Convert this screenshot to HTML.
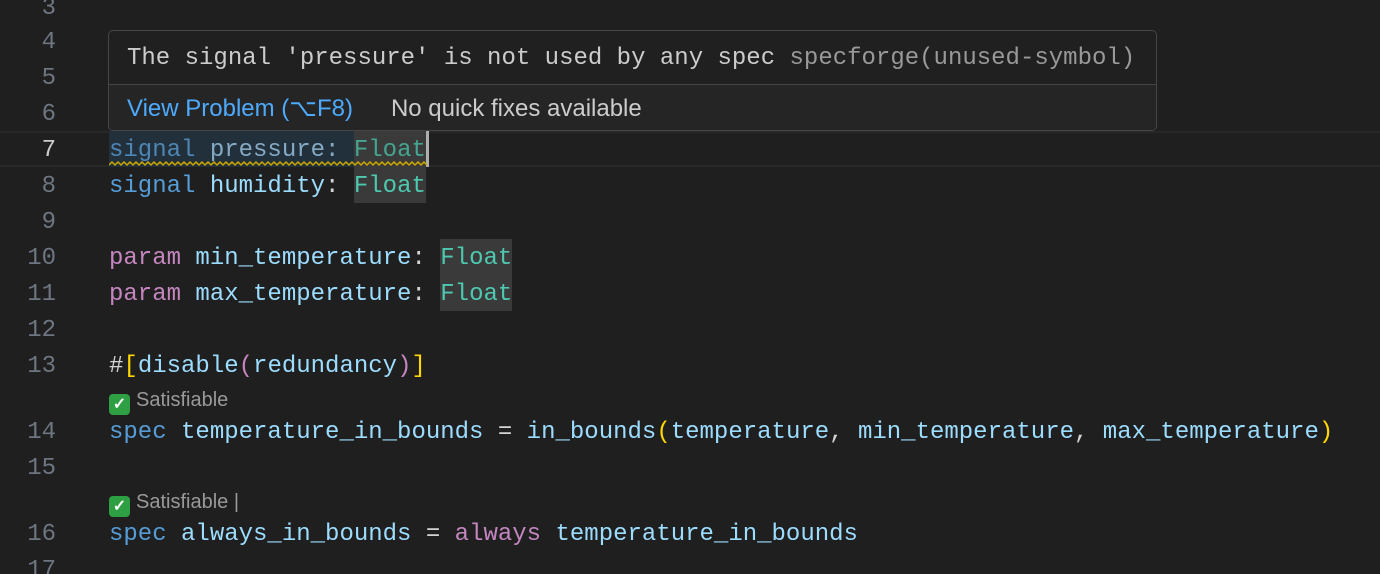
<!DOCTYPE html>
<html><head><style>
html,body{margin:0;width:1380px;height:574px;overflow:hidden}
body{background:#1f1f1f;font-family:"Liberation Mono",monospace;font-size:24px;position:relative}
.ln{position:absolute;left:0;width:56px;text-align:right;color:#6e7681;height:36px;line-height:40px}
.c{position:absolute;left:109px;height:36px;line-height:40px;white-space:pre;color:#9cdcfe}
.k{color:#569cd6}.p{color:#c586c0}.t{color:#4ec9b0}.w{color:#d4d4d4}.y{color:#ffd700}.v{color:#9cdcfe}
.fl{background:#3a3a3a;display:inline-block;height:36px;vertical-align:top;line-height:40px}
.lens{position:absolute;left:109px;height:30px;line-height:30px;font-family:"Liberation Sans",sans-serif;font-size:20px;color:#999;white-space:pre}
.chk{display:inline-block;width:21px;height:21px;background:#2ea043;border-radius:4px;color:#fff;text-align:center;line-height:21px;font-size:16px;vertical-align:-3px;margin-right:6px;font-weight:bold}
</style></head><body>
<div style="position:absolute;left:0;right:0;top:131px;height:32px;border-top:2px solid #282828;border-bottom:2px solid #282828"></div>
<div class="ln" style="top:-11px">3</div>
<div class="ln" style="top:23px">4</div>
<div class="ln" style="top:59px">5</div>
<div class="ln" style="top:95px">6</div>
<div class="ln" style="top:131px;color:#ccc">7</div>
<div class="ln" style="top:167px">8</div>
<div class="ln" style="top:203px">9</div>
<div class="ln" style="top:239px">10</div>
<div class="ln" style="top:275px">11</div>
<div class="ln" style="top:311px">12</div>
<div class="ln" style="top:347px">13</div>
<div class="ln" style="top:413px">14</div>
<div class="ln" style="top:449px">15</div>
<div class="ln" style="top:515px">16</div>
<div class="ln" style="top:551px">17</div>

<div class="c" style="top:131px"><span style="background:#22303c;display:inline-block;height:36px;vertical-align:top"><span style="color:#4f86b3">signal</span><span style="color:#86aac4"> pressure: </span></span><span class="fl" style="color:#45a590">Float</span><span style="display:inline-block;width:3px;height:36px;background:#aeafad;vertical-align:top"></span></div>
<svg style="position:absolute;left:109px;top:161px" width="318" height="6"><path d="M0 4 L3 1 L6 4 L9 1 L12 4 L15 1 L18 4 L21 1 L24 4 L27 1 L30 4 L33 1 L36 4 L39 1 L42 4 L45 1 L48 4 L51 1 L54 4 L57 1 L60 4 L63 1 L66 4 L69 1 L72 4 L75 1 L78 4 L81 1 L84 4 L87 1 L90 4 L93 1 L96 4 L99 1 L102 4 L105 1 L108 4 L111 1 L114 4 L117 1 L120 4 L123 1 L126 4 L129 1 L132 4 L135 1 L138 4 L141 1 L144 4 L147 1 L150 4 L153 1 L156 4 L159 1 L162 4 L165 1 L168 4 L171 1 L174 4 L177 1 L180 4 L183 1 L186 4 L189 1 L192 4 L195 1 L198 4 L201 1 L204 4 L207 1 L210 4 L213 1 L216 4 L219 1 L222 4 L225 1 L228 4 L231 1 L234 4 L237 1 L240 4 L243 1 L246 4 L249 1 L252 4 L255 1 L258 4 L261 1 L264 4 L267 1 L270 4 L273 1 L276 4 L279 1 L282 4 L285 1 L288 4 L291 1 L294 4 L297 1 L300 4 L303 1 L306 4 L309 1 L312 4 L315 1 L318 4" fill="none" stroke="#cca700" stroke-width="1.5"/></svg>
<div class="c" style="top:167px"><span class="k">signal</span> humidity<span class="w">:</span> <span class="t fl">Float</span></div>
<div class="c" style="top:239px"><span class="p">param</span> min_temperature<span class="w">:</span> <span class="t fl">Float</span></div>
<div class="c" style="top:275px"><span class="p">param</span> max_temperature<span class="w">:</span> <span class="t fl">Float</span></div>
<div class="c" style="top:347px"><span class="w">#</span><span class="y">[</span>disable<span class="p">(</span>redundancy<span class="p">)</span><span class="y">]</span></div>
<div class="lens" style="top:385px"><span class="chk">✓</span>Satisfiable</div>
<div class="c" style="top:413px"><span class="k">spec</span> temperature_in_bounds <span class="w">=</span> in_bounds<span class="y">(</span>temperature<span class="w">,</span> min_temperature<span class="w">,</span> max_temperature<span class="y">)</span></div>
<div class="lens" style="top:487px"><span class="chk">✓</span>Satisfiable |</div>
<div class="c" style="top:515px"><span class="k">spec</span> always_in_bounds <span class="w">=</span> <span class="p">always</span> temperature_in_bounds</div>

<div style="position:absolute;left:108px;top:30px;width:1047px;height:99px;border:1px solid #454545;border-radius:5px;background:#202020;overflow:hidden">
<div style="height:53px;line-height:55px;padding-left:18px;color:#ccc;white-space:pre">The signal 'pressure' is not used by any spec <span style="color:#999">specforge(unused-symbol)</span></div>
<div style="border-top:1px solid #454545;height:45px;background:#252526;line-height:47px;padding-left:18px;font-family:'Liberation Sans',sans-serif;font-size:24px;white-space:pre"><span style="color:#4daafc">View Problem (⌥F8)</span><span style="color:#ccc;margin-left:38px">No quick fixes available</span></div>
</div>
</body></html>
